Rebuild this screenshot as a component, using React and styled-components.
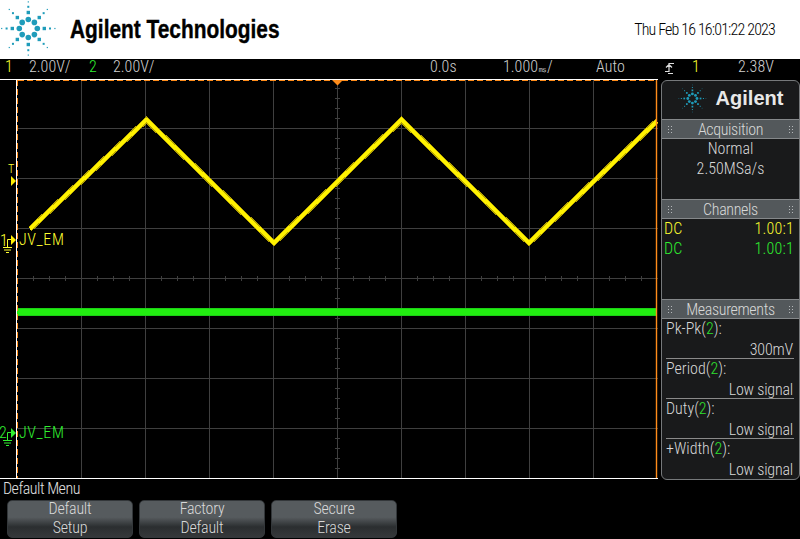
import React from "react";
import styled, { createGlobalStyle } from "styled-components";

const Global = createGlobalStyle`
  html, body { margin: 0; padding: 0; background: #000; }
  body { font-family: "Roboto", "Liberation Sans", sans-serif; font-weight: 300; font-stretch: 75%; overflow: hidden; }
`;

const Screen = styled.div`
  width: 800px; height: 539px; background: #000; display: flex; flex-direction: column; overflow: hidden;
`;
const Header = styled.header`
  height: 59px; background: #fff; display: flex; align-items: center; flex: none;
`;
const LogoSlot = styled.div`
  width: 70px; flex: none; height: 59px; display: flex; align-items: flex-start;
`;
const Brand = styled.div`
  flex: 1;
`;
const BrandText = styled.span`
  display: inline-block; font-family: "Liberation Sans", sans-serif; font-weight: 700; font-size: 25px; font-stretch: normal; color: #000;
  transform: scaleX(.835); transform-origin: left center; -webkit-text-stroke: .4px #000;
`;
const Clock = styled.div`
  color: #000; font-size: 16px; letter-spacing: -.83px; padding-right: 25px;
`;
const StatusBar = styled.div`
  height: 20px; flex: none; box-sizing: border-box; padding-left: 5px; display: grid; font-size: 16px; line-height: 16px; letter-spacing: 0; color: #d0d0d0; align-items: start;
  grid-template-columns: 24px 60px 24px 317px 73px 93px 69px 27px 46px 1fr;
`;
const Num = styled.span`color: ${p => p.$c};`;
const TinyUnit = styled.span`
  font-size: 9px; letter-spacing: 0;
`;
const TriggerIcon = styled.svg`
  display: block; margin-top: 3px;
`;
const Main = styled.div`
  display: flex; height: 400px; flex: none;
`;
const Gutter = styled.div`
  width: 16px; flex: none; position: relative; box-sizing: border-box; border-top: 1px solid #fff; border-bottom: 1px solid #fff;
`;
const Plot = styled.div`
  width: 642px; flex: none; position: relative; height: 400px;
`;
const Side = styled.aside`
  margin-left: 3px; width: 137px; height: 398px; margin-top: 1px; background: #191a1b; border: 1px solid #76797b; border-radius: 6px;
  display: flex; flex-direction: column; color: #d8d8d8; font-size: 16px; letter-spacing: 0; overflow: hidden;
`;
const SideLogo = styled.div`
  height: 38px; flex: none; display: flex; align-items: center; justify-content: center; gap: 9px; padding-bottom: 4px; box-sizing: border-box;
  font-family: "Liberation Sans", sans-serif; font-weight: 700; font-stretch: normal; font-size: 20px; color: #e8e8e8; letter-spacing: 0;
`;
const SectionHead = styled.div`
  height: 18px; flex: none; background: #53585b; border-top: 1px solid #85888a; border-bottom: 1px solid #85888a;
  display: flex; align-items: center; justify-content: space-between; padding: 0 5px; color: #d8d8d8; letter-spacing: -.35px; line-height: 17px;
`;
const Grip = styled.span`
  width: 6px; height: 9px; flex: none;
  background-image: radial-gradient(circle, #b5b8ba 1px, transparent 1px);
  background-size: 3px 3px;
`;
const Center = styled.div`
  text-align: center; height: 60px; line-height: 20px; flex: none; box-sizing: border-box;
`;
const ChannelRow = styled.div`
  display: flex; justify-content: space-between; padding: 0 5px 0 2px; height: 20px; line-height: 20px; letter-spacing: .2px; color: ${p => p.$c}; flex: none;
`;
const ChannelList = styled.div`
  height: 80px; flex: none;
`;
const Meas = styled.div`
  border-bottom: ${p => (p.$last ? "none" : "1px solid #8a8a8a")}; margin: 0 5px 0 4px; height: 39px; flex: none;
`;
const MeasName = styled.div`height: 20px; line-height: 20px;`;
const MeasValue = styled.div`height: 19px; line-height: 21px; text-align: right; padding-right: 1px; letter-spacing: -.2px;`;
const Green = styled.span`color: #2fe02f;`;
const MenuArea = styled.div`
  flex: 1; display: flex; flex-direction: column;
`;
const MenuTitle = styled.div`
  height: 21px; line-height: 20px; color: #e0e0e0; font-size: 16px; letter-spacing: -.5px; padding-left: 3px; flex: none;
`;
const KeyRow = styled.div`
  display: flex; gap: 6px; padding-left: 7px;
`;
const SoftKey = styled.div`
  width: 126px; height: 38px; border-radius: 5px; box-sizing: border-box; border: 1px solid #33373a;
  background: linear-gradient(#565b5e 0, #565b5e 45%, #2b2e30 72%, #35383a 100%);
  display: flex; flex-direction: column; align-items: center; color: #d8d8d8; font-size: 16px; letter-spacing: -.25px; line-height: 19px;
`;
const KeyLines = styled.div`
  margin-top: -2px; text-align: center;
`;
const Label = styled.div`
  position: absolute; left: ${p => p.$x}px; top: ${p => p.$y}px; color: ${p => p.$c}; font-size: ${p => p.$s || 16}px; letter-spacing: .6px; line-height: 16px;
`;

const BLUE = "#1f9cba";
const Burst = ({ size }) => {
  const dots = [];
  for (let k = 0; k < 8; k++) {
    const a = (k * Math.PI) / 4;
    const axis = k % 2 === 0;
    const rings = axis
      ? [[9, 2.8], [16, 1.7], [21.7, 1], [26.6, .6]]
      : [[8.6, 2.8], [15.5, 1.7], [21.7, 1], [26.9, .6]];
    rings.forEach(([r, s]) => {
      const x = r * Math.cos(a), y = r * Math.sin(a);
      dots.push(r < 10
        ? <circle key={`${k}-${r}`} cx={x} cy={y} r={s} fill={BLUE} />
        : <rect key={`${k}-${r}`} x={x - s} y={y - s} width={s * 2} height={s * 2} fill={BLUE} />);
    });
  }
  return (
    <svg width={size} height={size} viewBox="-28.3 -28.5 57 57" style={{ display: "block", flex: "none" }}>{dots}</svg>
  );
};

const Ground = ({ c }) => (
  <svg width="12" height="14" viewBox="0 0 12 14" style={{ display: "block" }}>
    <path d="M8 .5H4.5V8.5M0 8.5H9M1 11H8M3 13.5H6" fill="none" stroke={c} />
  </svg>
);

const Arrow = styled.svg`
  position: absolute; left: 11px; top: ${p => p.$y}px; display: block;
`;
const Pointer = ({ y, c }) => (
  <Arrow $y={y} width="5" height="10" viewBox="0 0 5 10"><path d="M0 0L5 5L0 10Z" fill={c} /></Arrow>
);

const W = 642, H = 400;
const ox = 16, oy = 79;

const Graticule = () => {
  const xs = [], ys = [];
  for (let i = 0; i < 9; i++) xs.push(81.5 + 64 * i - ox);
  for (let i = 0; i < 7; i++) ys.push(128.5 + 50 * i - oy);
  const cx = 337.5 - ox, cy = 278.5 - oy;
  const ticksV = [], ticksH = [];
  for (let y = 88; y < 478; y += 10) ticksV.push(<path key={y} d={`M${cx - 2.5} ${y - oy + .5}H${cx + 2.5}`} />);
  for (let x = 33; x < 657; x += 16) ticksH.push(<path key={x} d={`M${x - ox + .5} ${cy - 2.5}V${cy + 2.5}`} />);
  return (
    <g stroke="#3f3f3f" strokeWidth="1" fill="none">
      {xs.map(x => <path key={x} d={`M${x} 0V${H}`} />)}
      {ys.map(y => <path key={y} d={`M0 ${y}H${W}`} />)}
      {ticksV}{ticksH}
    </g>
  );
};

export default function App() {
  const pts = [[30, 229], [146.5, 120], [274, 243], [401.5, 120], [529, 243], [657, 121]]
    .map(([x, y]) => `${x - ox},${y - oy}`).join(" ");
  return (
    <Screen>
      <Global />
      <Header>
        <LogoSlot><Burst size={57} /></LogoSlot>
        <Brand><BrandText>Agilent Technologies</BrandText></Brand>
        <Clock>Thu Feb 16 16:01:22 2023</Clock>
      </Header>
      <StatusBar>
        <Num $c="#ffff30">1</Num>
        <span>2.00V/</span>
        <Num $c="#30f030">2</Num>
        <span>2.00V/</span>
        <span>0.0s</span>
        <span>1.000<TinyUnit>㎳</TinyUnit>/</span>
        <span>Auto</span>
        <TriggerIcon width="10" height="12" viewBox="0 0 10 12"><path d="M0 9.5H4V1.5H9M1 5.5L4 2.5L7 5.5M3 11.5H8" fill="none" stroke="#ddd" strokeWidth="1.2" /></TriggerIcon>
        <Num $c="#ffff30">1</Num>
        <span>2.38V</span>
      </StatusBar>
      <Main>
        <Gutter>
          <Label $x={0} $y={153} $c="#ffff30">1</Label>
          <Label $x={3} $y={159} $c="#ffff30"><Ground c="#ffff30" /></Label>
          <Pointer y={155} c="#ffee00" />
          <Label $x={-1} $y={345} $c="#30f030">2</Label>
          <Label $x={3} $y={352} $c="#30f030"><Ground c="#30f030" /></Label>
          <Pointer y={348} c="#30f030" />
          <Label $x={8} $y={81} $s={12} $c="#ffff30">T</Label>
          <Pointer y={96} c="#ffee00" />
        </Gutter>
        <Plot>
          <svg width={W} height={H} viewBox={`0 0 ${W} ${H}`} style={{ display: "block" }}>
            <rect width={W} height={H} fill="#000" />
            <Graticule />
            <polyline points={pts} fill="none" stroke="#b5a400" strokeWidth="5.5" shapeRendering="crispEdges" />
            <polyline points={pts} fill="none" stroke="#fff200" strokeWidth="3.6" shapeRendering="crispEdges" />
            <rect x="1" y="229" width="639" height="8" fill="#1bd015" />
            <rect x="1" y="230" width="639" height="6" fill="#22ee11" />
            <path d="M0 .5H642M.5 0V400M0 399.5H642" stroke="#fff" strokeWidth="1" fill="none" />
            <path d="M2 1.5H640" stroke="#ff8c1a" strokeWidth="1" strokeDasharray="6 3" />
            <path d="M1.5 1V399" stroke="#ff8c1a" strokeWidth="1" strokeDasharray="6 3" />
            <path d="M640.5 1V399" stroke="#ff8c1a" strokeWidth="1.4" />
            <path d="M316 1H327L321.5 6.5Z" fill="#ff8c1a" />
          </svg>
          <Label $x={3} $y={153} $c="#ffff30">JV_EM</Label>
          <Label $x={3} $y={346} $c="#30f030">JV_EM</Label>
        </Plot>
        <Side>
          <SideLogo><Burst size={29} />Agilent</SideLogo>
          <SectionHead><Grip />Acquisition<Grip /></SectionHead>
          <Center>Normal<br />2.50MSa/s</Center>
          <SectionHead><Grip />Channels<Grip /></SectionHead>
          <ChannelList>
            <ChannelRow $c="#ffff30"><span>DC</span><span>1.00:1</span></ChannelRow>
            <ChannelRow $c="#30f030"><span>DC</span><span>1.00:1</span></ChannelRow>
          </ChannelList>
          <SectionHead><Grip />Measurements<Grip /></SectionHead>
          <Meas><MeasName>Pk-Pk(<Green>2</Green>):</MeasName><MeasValue>300mV</MeasValue></Meas>
          <Meas><MeasName>Period(<Green>2</Green>):</MeasName><MeasValue>Low signal</MeasValue></Meas>
          <Meas><MeasName>Duty(<Green>2</Green>):</MeasName><MeasValue>Low signal</MeasValue></Meas>
          <Meas $last><MeasName>+Width(<Green>2</Green>):</MeasName><MeasValue>Low signal</MeasValue></Meas>
        </Side>
      </Main>
      <MenuArea>
        <MenuTitle>Default Menu</MenuTitle>
        <KeyRow>
          <SoftKey><KeyLines>Default<br />Setup</KeyLines></SoftKey>
          <SoftKey><KeyLines>Factory<br />Default</KeyLines></SoftKey>
          <SoftKey><KeyLines>Secure<br />Erase</KeyLines></SoftKey>
        </KeyRow>
      </MenuArea>
    </Screen>
  );
}
